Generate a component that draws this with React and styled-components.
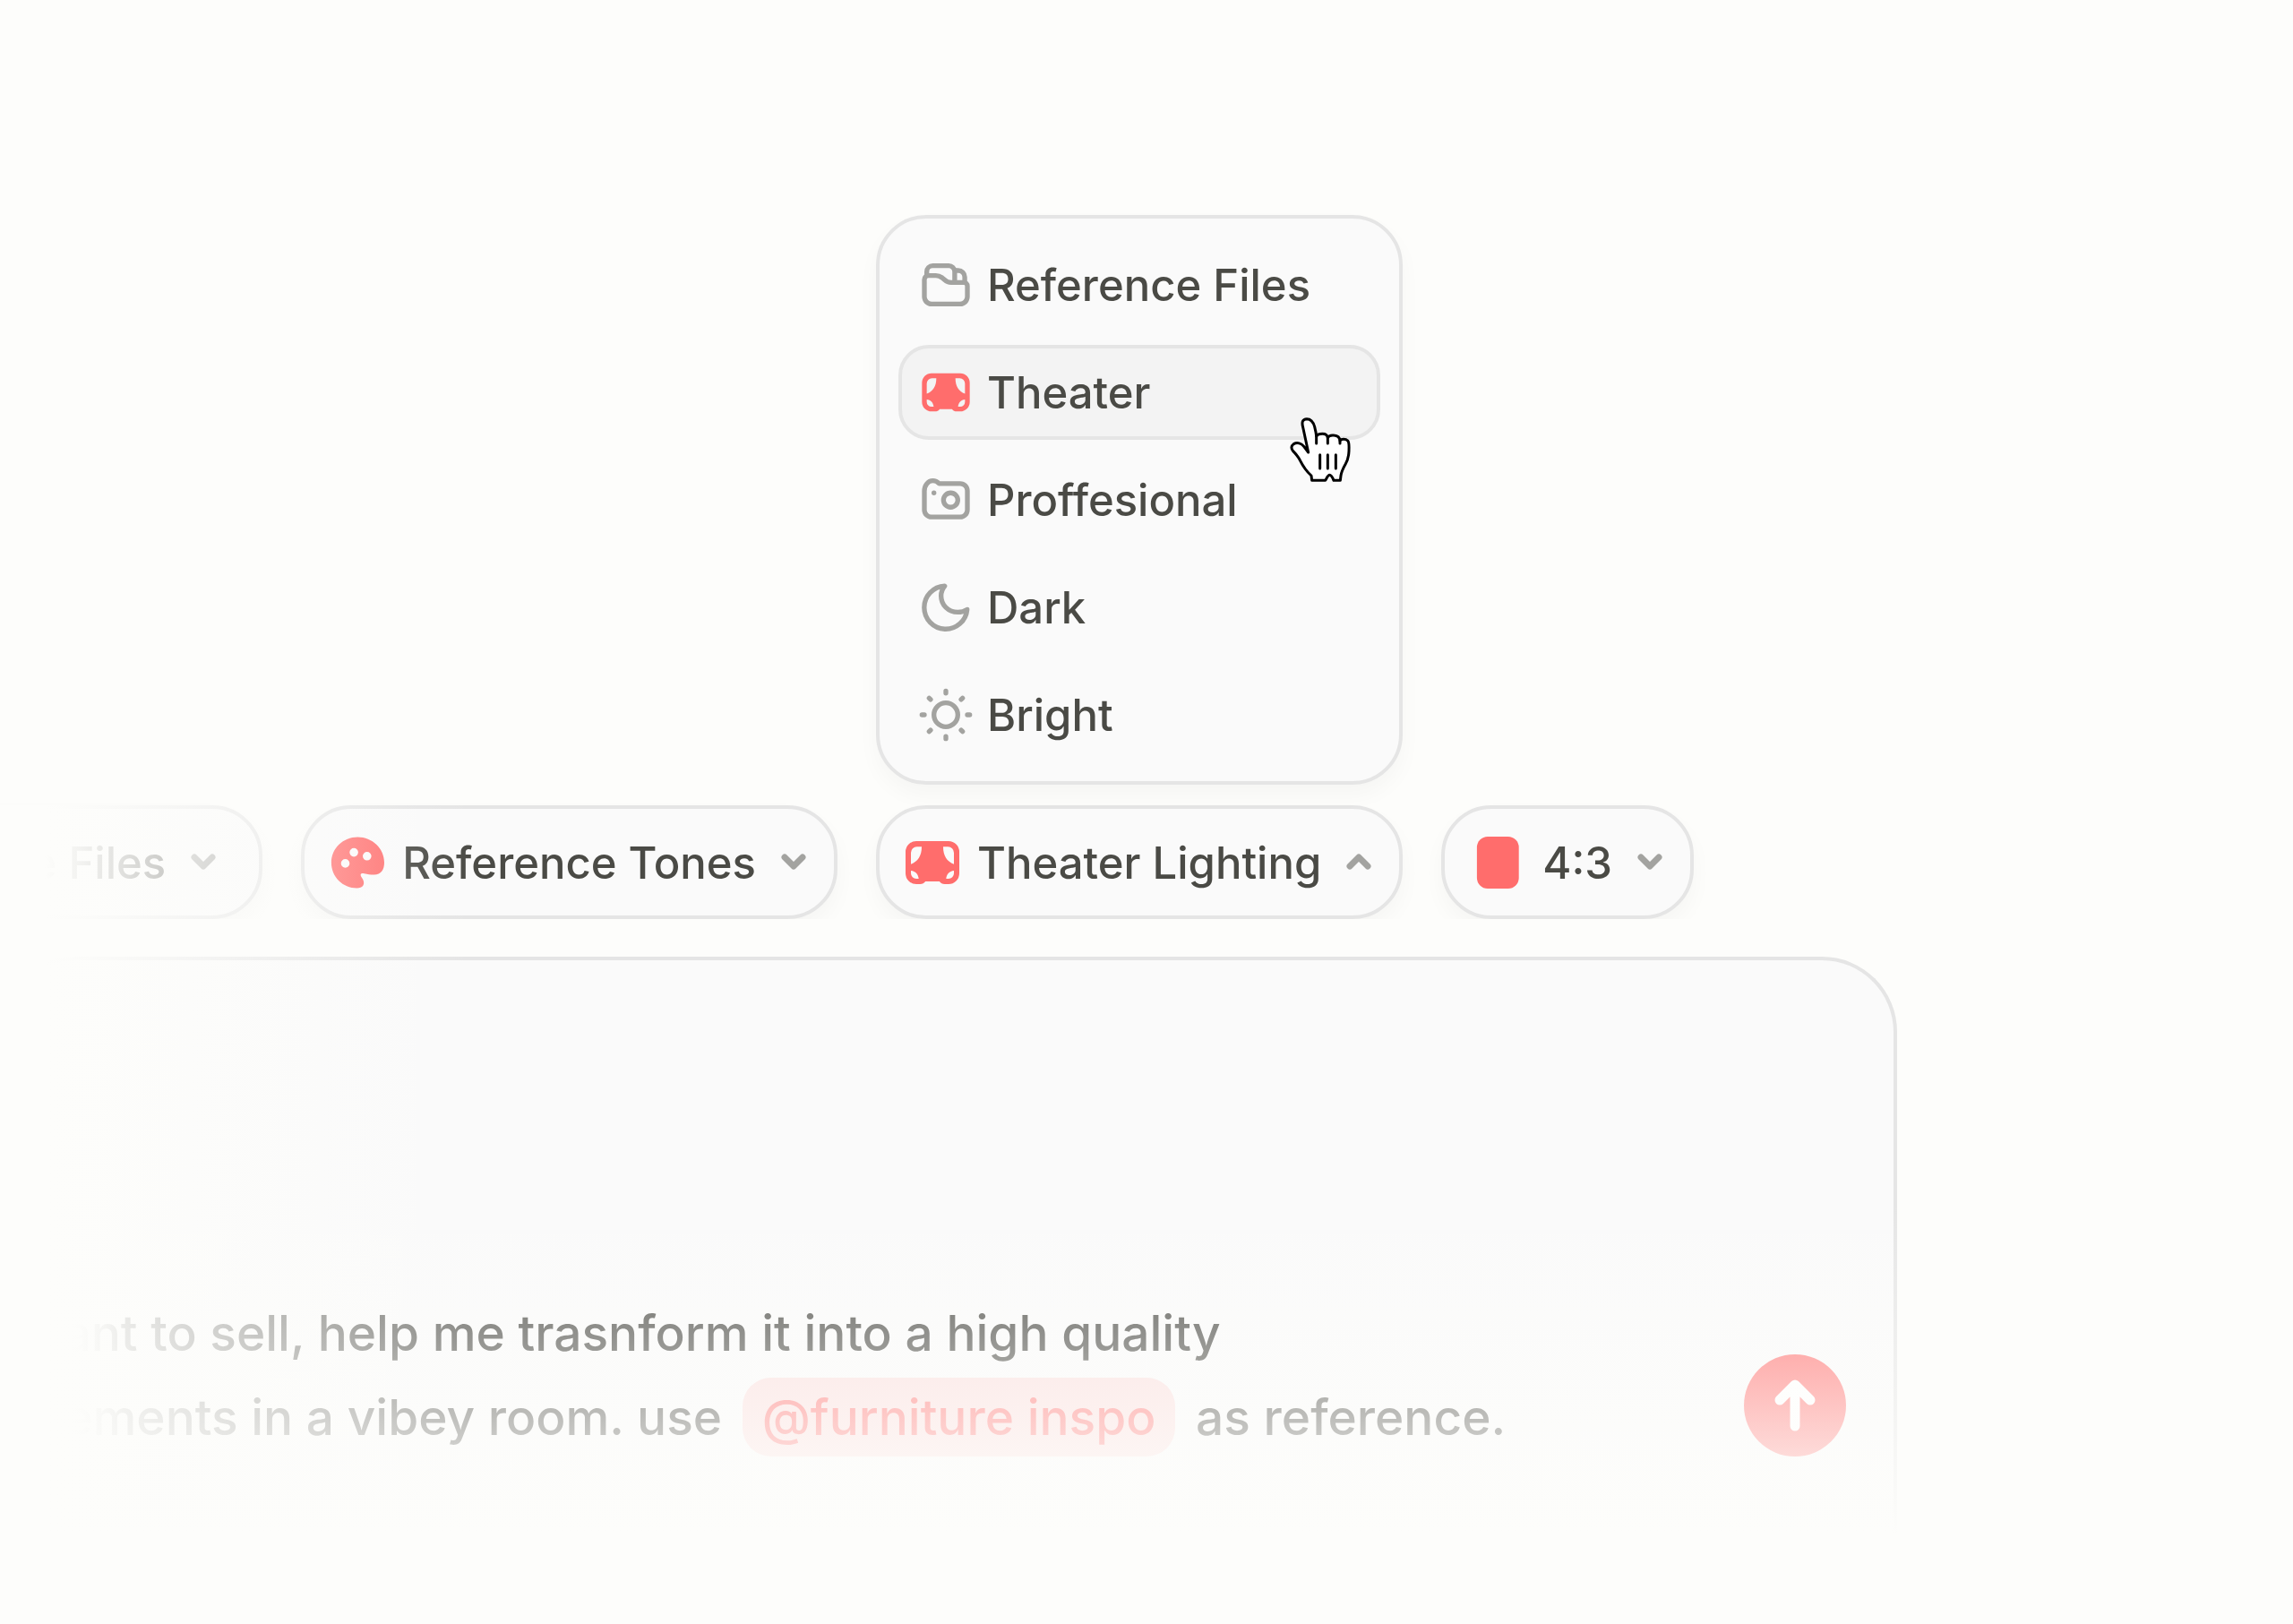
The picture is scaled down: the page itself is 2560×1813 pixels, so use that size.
import React, { useState } from 'react';

import styled, { createGlobalStyle } from 'styled-components';

const GlobalStyle = createGlobalStyle`
  :root {
    --page: #fdfdfb;
    --surface: #fafafa;
    --surface-active: #f3f3f3;
    --line: #e5e5e5;
    --text: #4a4a45;
    --muted: #a3a3a0;
    --accent: #ff6d6c;
    --accent-soft: #fbdcdb;
  }

  * {
    box-sizing: border-box;
  }

  body {
    margin: 0;
    background: var(--page);
    color: var(--text);
    font-family: Inter, 'Liberation Sans', sans-serif;
    font-weight: 500;
  }

  button {
    font: inherit;
    color: inherit;
    cursor: pointer;
  }
`;

const Page = styled.main`
  min-height: 100vh;
  display: flex;
  flex-direction: column;
  justify-content: flex-end;
  overflow: hidden;
`;

const Composer = styled.form`
  position: relative;
  display: flex;
  flex-direction: column;
  gap: 42px;
  margin-right: 442px;

  /* fades the left side and the foot of the composer into the page */
  &::after {
    content: '';
    position: absolute;
    inset: 0 -8px 0 0;
    pointer-events: none;
    background:
      linear-gradient(
        to right,
        var(--page) 50px,
        rgba(253, 253, 251, 0.94) 90px,
        rgba(253, 253, 251, 0.74) 180px,
        rgba(253, 253, 251, 0.12) 450px,
        transparent 530px
      ),
      linear-gradient(to top, var(--page) 98px, transparent 473px);
  }
`;

const Chips = styled.div`
  display: flex;
  justify-content: flex-end;
  gap: 43px;
  padding-right: 227px;
`;

const ChipWrap = styled.div`
  position: relative;
  flex-shrink: 0;
`;

const Chip = styled.button`
  height: 127px;
  display: flex;
  align-items: center;
  gap: 20px;
  padding: 0 ${(props) => (props.$roomy ? '40px' : '23px')} 0 23px;
  background: var(--surface);
  border: 4px solid var(--line);
  border-radius: 56px;
  box-shadow: 0 12px 24px rgba(0, 0, 0, 0.03);
  clip-path: inset(-40px -40px 0);
  font-size: 49px;
  line-height: 60px;
  white-space: nowrap;
`;

const ChipLabel = styled.span`
  display: flex;
  align-items: center;
  gap: 14px;
`;

const Label = styled.span`
  padding-top: 2px;
`;

const Menu = styled.div`
  position: absolute;
  z-index: 1;
  left: 0;
  right: 0;
  bottom: calc(100% + 23px);
  display: flex;
  flex-direction: column;
  gap: 14px;
  padding: 21px;
  background: var(--surface);
  border: 4px solid var(--line);
  border-radius: 56px;
  box-shadow: 0 12px 24px rgba(0, 0, 0, 0.03);
`;

const MenuItem = styled.button`
  position: relative;
  height: 106px;
  display: flex;
  align-items: center;
  gap: 14px;
  padding: 0 17px;
  background: ${(props) =>
    props.$active ? 'var(--surface-active)' : 'transparent'};
  border: 4px solid ${(props) => (props.$active ? 'var(--line)' : 'transparent')};
  border-radius: 34px;
  font-size: 49px;
  line-height: 60px;
  text-align: left;
`;

const Icon = styled.svg`
  flex-shrink: 0;
  width: ${(props) => props.$size}px;
  height: ${(props) => props.$size}px;
  color: ${(props) => (props.$accent ? 'var(--accent)' : 'var(--muted)')};
`;

const Pointer = styled.svg`
  position: absolute;
  right: 28px;
  bottom: -52px;
  width: 70px;
  height: 74px;
`;

const Panel = styled.div`
  min-height: 745px;
  display: flex;
  align-items: flex-end;
  justify-content: space-between;
  padding: 53px 53px 184px 21px;
  background: var(--surface);
  border: 4px solid var(--line);
  border-bottom: none;
  border-radius: 84px 84px 0 0;
`;

const Prompt = styled.div`
  font-size: 55px;
  line-height: 94px;
  white-space: nowrap;
  outline: none;
  mask-image: linear-gradient(to right, transparent 55px, #000 115px);
`;

const Mention = styled.span`
  display: inline-block;
  margin: 0 8px;
  padding: 0 22px;
  border-radius: 32px;
  background: var(--accent-soft);
  color: var(--accent);
  line-height: 88px;
`;

const SendButton = styled.button`
  flex-shrink: 0;
  width: 114px;
  height: 114px;
  margin-bottom: 3px;
  padding: 0;
  border: none;
  border-radius: 50%;
  background: var(--accent);

  svg {
    display: block;
  }
`;

const stroke = {
  fill: 'none',
  stroke: 'currentColor',
  strokeWidth: 2,
  strokeLinecap: 'round',
  strokeLinejoin: 'round',
};

const shapes = {
  folder: (
    <g {...stroke} strokeLinecap="butt">
      <path d="M3 9.8V17a3 3 0 0 0 3 3h12a3 3 0 0 0 3-3v-4.5A1.5 1.5 0 0 0 19.5 11h-5.3c-1 0-1.9-.3-2.6-1L10.4 9c-.8-.6-1.6-.9-2.6-.9H4.7A1.7 1.7 0 0 0 3 9.8Z" />
      <path d="M4 8.6V6.5A2.5 2.5 0 0 1 6.5 4h6.7a2.5 2.5 0 0 1 2.5 2.5V11" />
      <path d="M15.7 6h1.5a2.7 2.7 0 0 1 2.7 2.7v2.6" />
    </g>
  ),
  theater: (
    <path
      fill="currentColor"
      fillRule="evenodd"
      d="M6 4h12a4 4 0 0 1 4 4v8a4 4 0 0 1-4 4h-1.4c-.9 0-1.5-.3-2-1H9.4c-.5.7-1.1 1-2 1H6a4 4 0 0 1-4-4V8a4 4 0 0 1 4-4ZM8 6.1H6.2A2.2 2.2 0 0 0 4 8.3v4.3C6.6 11.6 8 9.5 8 6.1ZM16 6.1c0 3.4 1.4 5.5 4 6.5V8.3a2.2 2.2 0 0 0-2.2-2.2ZM4 15v1a2 2 0 0 0 2 2h.9C6.7 16.3 5.7 15.2 4 15ZM20 15c-1.7.2-2.7 1.3-2.9 3h.9a2 2 0 0 0 2-2Z"
    />
  ),
  camera: (
    <g {...stroke}>
      <path d="M3 16.2V8.4C3 6 4.5 4 6.6 4c1.1 0 1.9.5 2.6 1.2H18a3 3 0 0 1 3 3v8a3 3 0 0 1-3 3H6a3 3 0 0 1-3-3Z" />
      <circle cx="14" cy="12.1" r="3" />
      <circle cx="7" cy="9.1" r="1" fill="currentColor" stroke="none" />
    </g>
  ),
  moon: (
    <path
      {...stroke}
      d="M11.5 3.1A9 9 0 1 0 20.9 12.9C19.8 13.6 18.5 14 17 14C13 14 10 11 10 7.2C10 5.6 10.6 4.2 11.5 3.1Z"
    />
  ),
  sun: (
    <g {...stroke}>
      <circle cx="12" cy="12" r="5" />
      <path d="M12 2v.9M12 21.1v.9M2 12h1M21 12h1M5 5l.6.6M18.4 18.4l.6.6M5 19l.6-.6M18.4 5.6l.6-.6" />
    </g>
  ),
  palette: (
    <path
      fill="currentColor"
      fillRule="evenodd"
      d="M12.1 2.5C6.7 2.5 2.3 6.7 2.3 12s4.3 9.5 9.5 9.5c2.2 0 3-1.3 2.4-2.9-.3-.8-1-1.5-1-2 0-.6.6-.7 1.4-.5 1.2.3 2.2.4 3.6.4 2.6 0 3.8-1.9 3.8-4.5 0-5.3-4.5-9.5-9.9-9.5ZM10.7 6.6a1.6 1.6 0 1 1 0 3.2 1.6 1.6 0 0 1 0-3.2ZM15.6 8a1.6 1.6 0 1 1 0 3.2 1.6 1.6 0 0 1 0-3.2ZM7.5 10.7a1.6 1.6 0 1 1 0 3.2 1.6 1.6 0 0 1 0-3.2Z"
    />
  ),
  ratio: <rect x="4.3" y="2.3" width="15.6" height="19.4" rx="4" fill="currentColor" />,
};

const Glyph = ({ name, size, accent }) => (
  <Icon viewBox="0 0 24 24" $size={size} $accent={accent} aria-hidden="true">
    {shapes[name]}
  </Icon>
);

const Chevron = ({ up }) => (
  <Icon viewBox="0 0 44 44" $size={44} aria-hidden="true">
    <path
      {...stroke}
      strokeWidth="7"
      d={up ? 'M12 26L22 16L32 26' : 'M12 16L22 26L32 16'}
    />
  </Icon>
);

const HandPointer = () => (
  <Pointer viewBox="60 44 210 222" aria-hidden="true">
    <g stroke="#000" strokeLinecap="round" strokeLinejoin="round">
      <path
        fill="#fff"
        strokeWidth="9"
        d="M125 164L107 80C102 62 106 53 120 52C135 52 142 64 146 78C149 90 151 98 152 110C156 104 164 102 172 102C184 102 189 108 190 115C194 107 203 106 211 107C224 108 230 115 231 125C236 118 250 118 257 125C263 132 261 144 261 160C260 180 256 192 250 202C242 216 236 228 234 242L232 258L210 258C206 248 201 240 196 240C191 240 188 248 182 258L137 258L135 242C124 232 108 212 98 192C92 180 82 168 74 160C66 150 68 142 76 136C88 129 102 134 110 144Z"
      />
      <path fill="none" strokeWidth="9" d="M152 110V134M190 115V134M231 125V134" />
      <path fill="none" strokeWidth="9" d="M164 172V218M190 172V218M217 172V218" />
    </g>
  </Pointer>
);

const chips = [
  { id: 'files', label: 'Reference Files', icon: 'folder', roomy: true },
  { id: 'tones', label: 'Reference Tones', icon: 'palette' },
  { id: 'lighting', label: 'Theater Lighting', icon: 'theater' },
  { id: 'ratio', label: '4:3', icon: 'ratio' },
];

const lightingOptions = [
  { label: 'Reference Files', icon: 'folder' },
  { label: 'Theater', icon: 'theater' },
  { label: 'Proffesional', icon: 'camera' },
  { label: 'Dark', icon: 'moon' },
  { label: 'Bright', icon: 'sun' },
];

const LightingMenu = () => {
  const [selected, setSelected] = useState('Theater');

  return (
    <Menu role="menu" aria-label="Lighting">
      {lightingOptions.map(({ label, icon }) => {
        const active = label === selected;

        return (
          <MenuItem
            key={label}
            type="button"
            role="menuitemradio"
            aria-checked={active}
            $active={active}
            onClick={() => setSelected(label)}
          >
            <Glyph name={icon} size={64} accent={active} />
            <Label>{label}</Label>
            {active && <HandPointer />}
          </MenuItem>
        );
      })}
    </Menu>
  );
};

const App = () => {
  const [open, setOpen] = useState('lighting');

  return (
    <>
      <GlobalStyle />
      <Page>
        <Composer onSubmit={(e) => e.preventDefault()}>
          <Chips>
            {chips.map(({ id, label, icon, roomy }) => (
              <ChipWrap key={id}>
                <Chip
                  type="button"
                  aria-haspopup="menu"
                  aria-expanded={open === id}
                  $roomy={roomy}
                  onClick={() => setOpen(open === id ? null : id)}
                >
                  <ChipLabel>
                    <Glyph name={icon} size={72} accent />
                    <Label>{label}</Label>
                  </ChipLabel>
                  <Chevron up={open === id} />
                </Chip>
                {id === 'lighting' && open === id && <LightingMenu />}
              </ChipWrap>
            ))}
          </Chips>
          <Panel>
            <Prompt
              role="textbox"
              aria-label="Prompt"
              aria-multiline="true"
              contentEditable
              suppressContentEditableWarning
              spellCheck={false}
            >
              want to sell, help me trasnform it into a high quality
              <br />
              elements in a vibey room. use <Mention>@furniture inspo</Mention> as
              reference.
            </Prompt>
            <SendButton type="submit" aria-label="Send">
              <svg viewBox="0 0 114 114" width="114" height="114" aria-hidden="true">
                <path
                  d="M57 80V34M40 51L57 34L74 51"
                  fill="none"
                  stroke="#fff"
                  strokeWidth="11"
                  strokeLinecap="round"
                  strokeLinejoin="round"
                />
              </svg>
            </SendButton>
          </Panel>
        </Composer>
      </Page>
    </>
  );
};

export default App;
